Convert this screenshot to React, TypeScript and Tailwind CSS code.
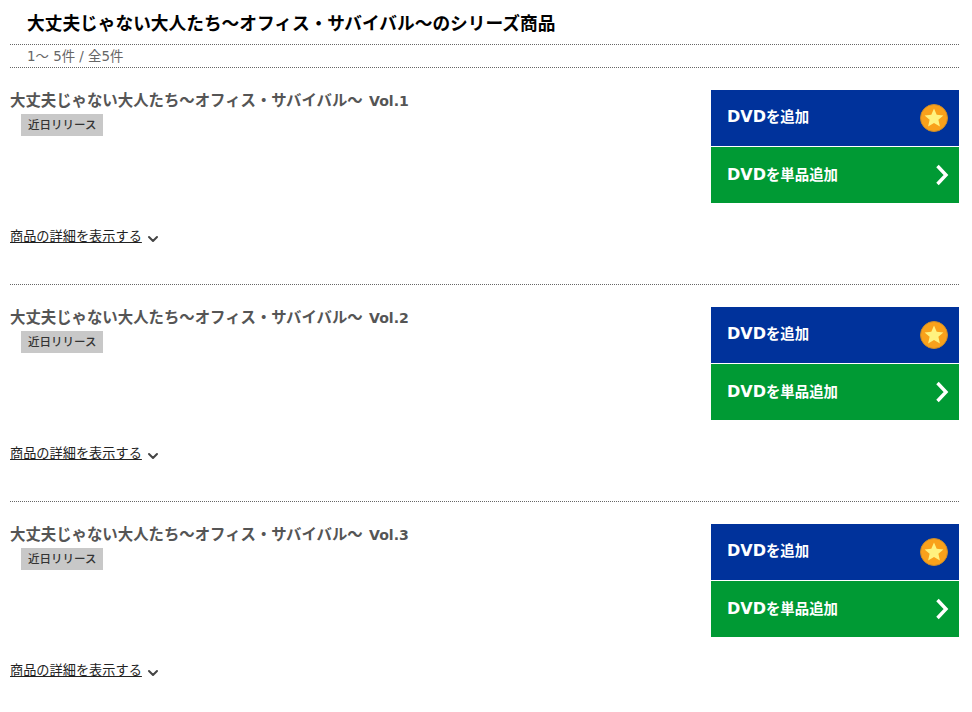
import React from 'react';
import { ChevronDown } from 'lucide-react';

const seriesName = '大丈夫じゃない大人たち〜オフィス・サバイバル〜';
const items = ['Vol.1', 'Vol.2', 'Vol.3'];

function StarBadge() {
  return (
    <svg width="28" height="28" viewBox="0 0 28 28">
      <circle cx="14" cy="14" r="13.5" fill="#f9a11b" stroke="#c98a2a" strokeWidth="1" />
      <path d="M14 4.600l2.700 6.200 6.700.6-5 4.400 1.500 6.600L14 19.100l-5.900 3.300 1.500-6.600-5-4.400 6.700-.6z" fill="#fff27f" />
    </svg>
  );
}

function ArrowRight() {
  return (
    <svg width="14" height="22" viewBox="0 0 14 22" fill="none" stroke="currentColor" strokeWidth="3.4">
      <path d="M2.500 2l8.500 9-8.500 9" />
    </svg>
  );
}

function SeriesItem({ vol }: { vol: string }) {
  return (
    <div className="h-[217px] border-b border-dotted border-[#666] pt-[22px]">
      <div className="flex justify-between">
        <div>
          <p className="h-[21px] text-[15.4px] leading-[21px] font-bold text-[#555]">
            {seriesName} <span className="ml-[2px] font-['DejaVu_Sans'] text-[14.1px]">{vol}</span>
          </p>
          <span className="ml-[11px] mt-[3px] inline-block h-[22px] bg-[#c8c8c8] px-[7px] text-[11.5px] leading-[23px] font-medium text-[#333]">近日リリース</span>
        </div>
        <div className="w-[248px] text-[14.4px] font-bold text-white">
          <div className="flex h-[56px] items-center justify-between bg-[#00329b] pl-4 pr-[11px]">
            <span className="-mt-[3px]"><span className="font-['DejaVu_Sans'] text-[16px]">DVD</span>を追加</span>
            <StarBadge />
          </div>
          <div className="mt-px flex h-[56px] items-center justify-between bg-[#009a34] pl-4 pr-[10px]">
            <span className="-mt-[1px]"><span className="font-['DejaVu_Sans'] text-[16px]">DVD</span>を単品追加</span>
            <ArrowRight />
          </div>
        </div>
      </div>
      <div className="mt-[25px] flex items-center gap-[3px]">
        <span className="text-[13.2px] leading-[18px] text-[#222] underline">商品の詳細を表示する</span>
        <ChevronDown size={16} strokeWidth={3} className="mt-[2px] translate-y-px text-[#444]" />
      </div>
    </div>
  );
}

export default function App() {
  return (
    <div className="h-[712px] w-[972px] overflow-hidden bg-white pl-[10px] pr-[13px] font-['Liberation_Sans','Noto_Sans_CJK_JP',sans-serif]">
      <h2 className="h-[45px] border-b border-dotted border-[#666] pl-[17px] pt-[11px] text-[17.7px] leading-[26px] font-bold text-black">
        {seriesName}のシリーズ商品
      </h2>
      <div className="h-[23px] border-b border-dotted border-[#666] pl-[17px] font-['DejaVu_Sans','Noto_Sans_CJK_JP',sans-serif] text-[13.4px] leading-[23px] text-[#666]">1〜 5件 / 全5件</div>
      {items.map((vol) => (
        <SeriesItem key={vol} vol={vol} />
      ))}
    </div>
  );
}
